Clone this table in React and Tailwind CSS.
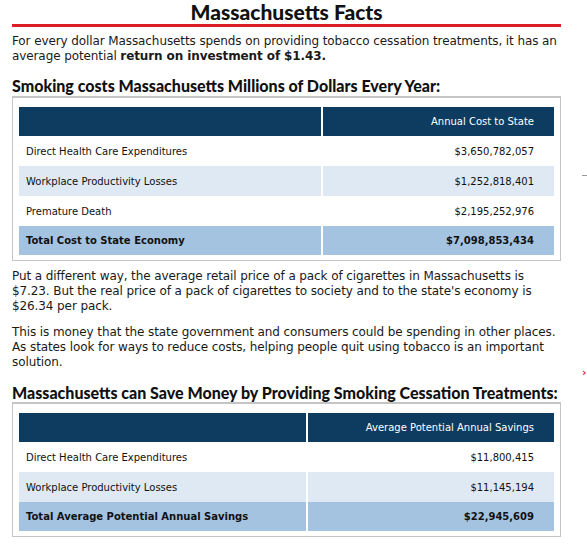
const costRows = [
  { label: "Direct Health Care Expenditures", value: "$3,650,782,057" },
  { label: "Workplace Productivity Losses", value: "$1,252,818,401" },
  { label: "Premature Death", value: "$2,195,252,976" },
];

const savingsRows = [
  { label: "Direct Health Care Expenditures", value: "$11,800,415" },
  { label: "Workplace Productivity Losses", value: "$11,145,194" },
];

const heading =
  "font-['Lato',sans-serif] font-black text-[16px] whitespace-nowrap tracking-normal text-[#111]";

// Boxed data table: navy header, alternating rows, blue total row
const FactTable = ({ column, rows, totalLabel, totalValue, firstWidth }) => (
  <div className="border border-[#c4c4c4] border-t-2 pt-[9px] px-[6px] pb-[5px] font-['DejaVu_Sans',sans-serif] text-[10px] tracking-normal text-[#111]">
    <div className="flex gap-[2px] h-[29px] bg-white">
      <div className="bg-[#0e3b60]" style={{ width: firstWidth }}></div>
      <div className="flex-1 bg-[#0e3b60] text-white flex items-center justify-end pr-[20px]">
        {column}
      </div>
    </div>
    {rows.map((row, i) => {
      const bg = i % 2 === 1 ? "bg-[#dfe9f4]" : "bg-white";
      return (
        <div key={row.label} className="flex gap-[2px] h-[30px] bg-white">
          <div className={`flex items-center pl-[7px] ${bg}`} style={{ width: firstWidth }}>
            {row.label}
          </div>
          <div className={`flex-1 flex items-center justify-end pr-[20px] ${bg}`}>
            {row.value}
          </div>
        </div>
      );
    })}
    <div className="flex gap-[2px] h-[29px] bg-white font-bold">
      <div className="flex items-center pl-[7px] bg-[#a3c3e1]" style={{ width: firstWidth }}>
        {totalLabel}
      </div>
      <div className="flex-1 flex items-center justify-end pr-[20px] bg-[#a3c3e1]">
        {totalValue}
      </div>
    </div>
  </div>
);

export default function App() {
  return (
    <div className="flex bg-white min-h-[544px] pl-[12px] font-['DejaVu_Sans',sans-serif] text-[12px] tracking-[-0.1px] leading-[15px] text-[#1a1a1a]">
      <div className="w-[550px]">
        <h1 className="font-['Lato',sans-serif] font-black text-[21px] leading-[24px] tracking-normal text-center text-[#111] border-b-[3px] border-[#dc1d26]">
          Massachusetts Facts
        </h1>

        <p className="mt-[7px] pr-[4px]">
          For every dollar Massachusetts spends on providing tobacco cessation
          treatments, it has an average potential{" "}
          <b>return on investment of $1.43.</b>
        </p>

        <h2 className={`${heading} leading-[20px] mt-[12px]`}>
          Smoking costs Massachusetts Millions of Dollars Every Year:
        </h2>
        <FactTable
          column="Annual Cost to State"
          rows={costRows}
          totalLabel="Total Cost to State Economy"
          totalValue="$7,098,853,434"
          firstWidth="302px"
        />

        <p className="mt-[8px] pr-[4px]">
          Put a different way, the average retail price of a pack of cigarettes
          in Massachusetts is $7.23. But the real price of a pack of cigarettes
          to society and to the state's economy is $26.34 per pack.
        </p>
        <p className="mt-[11px] pr-[4px]">
          This is money that the state government and consumers could be
          spending in other places. As states look for ways to reduce costs,
          helping people quit using tobacco is an important solution.
        </p>

        <h2 className={`${heading} leading-[18px] mt-[14px]`}>
          Massachusetts can Save Money by Providing Smoking Cessation Treatments:
        </h2>
        <FactTable
          column="Average Potential Annual Savings"
          rows={savingsRows}
          totalLabel="Total Average Potential Annual Savings"
          totalValue="$22,945,609"
          firstWidth="287px"
        />
      </div>

      {/* edge of the neighbouring sidebar, cut off by the window */}
      <div className="ml-[21px] flex flex-col">
        <div className="mt-[175px] w-[5px] h-px bg-[#999]"></div>
        <div className="mt-[191px] text-[11px] leading-[12px] font-bold text-[#d9232a]">›</div>
      </div>
    </div>
  );
}
